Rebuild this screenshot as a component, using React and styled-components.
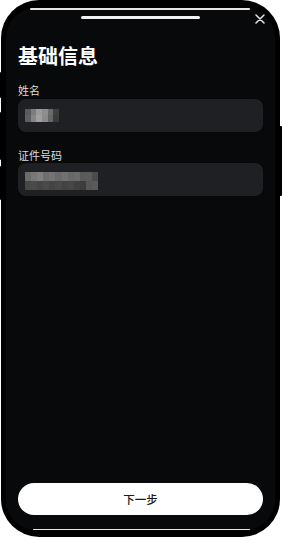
import React from "react";
import styled, { createGlobalStyle } from "styled-components";

const GlobalStyle = createGlobalStyle`
  html, body {
    margin: 0;
    padding: 0;
    background: #ffffff;
    font-family: "Noto Sans CJK SC", "Noto Sans", sans-serif;
  }
`;

const Page = styled.div`
  width: 283px;
  height: 540px;
  padding: 0 0 0 1px;
  box-sizing: border-box;
`;

const Phone = styled.div`
  position: relative;
  width: 279px;
  height: 537px;
  border-radius: 38px;
  background: #000;
  padding: 8px 5px 7px 5px;
  box-sizing: border-box;
`;

const SideKey = styled.div`
  position: absolute;
  top: ${(p) => p.$top}px;
  height: ${(p) => p.$h}px;
  width: 3px;
  background: #000;
  border-radius: 1px;
  ${(p) => (p.$right ? "right: -2px;" : "left: -1px;")}
`;

const Screen = styled.div`
  position: relative;
  height: 100%;
  border-radius: 30px;
  background: #08090a;
  display: flex;
  flex-direction: column;
  padding: 1.5px 12px 15.5px;
  box-sizing: border-box;

  &::before,
  &::after {
    content: "";
    position: absolute;
    left: 24px;
    right: 25px;
    height: 1.5px;
    border-radius: 1px;
    background: #e6e6e6;
  }
  &::before {
    top: 0;
  }
  &::after {
    bottom: 0;
    left: 27px;
  }
`;

const Grabber = styled.div`
  align-self: center;
  margin-top: 6.5px;
  width: 119px;
  height: 3px;
  border-radius: 2px;
  background: #f2f2f2;
`;

const Close = styled.div`
  position: absolute;
  top: 5px;
  right: 9px;
  width: 12px;
  height: 12px;
  display: flex;
  align-items: center;
  justify-content: center;
`;

const Title = styled.h1`
  margin: 23px 0 0;
  font-size: 20px;
  line-height: 28px;
  font-weight: 700;
  color: #fff;
`;

const Field = styled.div`
  display: flex;
  flex-direction: column;
  margin-top: ${(p) => p.$mt}px;
`;

const Label = styled.div`
  font-size: 11px;
  line-height: 15px;
  color: #dcdcdc;
`;

const Input = styled.div`
  margin-top: 0.5px;
  height: 33px;
  border-radius: 8px;
  background: #1e2023;
  display: flex;
  align-items: flex-start;
  padding: ${(p) => p.$pt}px 7px 0;
  box-sizing: border-box;
`;

const Mosaic = styled.div`
  display: grid;
  grid-template-columns: repeat(${(p) => p.$cols}, ${(p) => p.$cw}px);
  grid-auto-rows: ${(p) => p.$rh}px;
`;

const Cell = styled.div`
  background: ${(p) => p.$c};
`;

const Button = styled.button`
  margin-top: auto;
  height: 32px;
  border: none;
  border-radius: 16px;
  background: #fff;
  color: #1a1a1a;
  font-family: "Noto Sans CJK SC", sans-serif;
  font-size: 11.5px;
  font-weight: 500;
`;

const nameCells = [
  ["#5a5a5a", "#7c7c7c", "#9a9a9a", "#8e8e8e", "#6a6a6a", "#3e3e3e"],
  ["#5e5e5e", "#858585", "#a0a0a0", "#8a8a8a", "#666", "#3a3a3a"],
];

const idCells = [
  ["#6b6b6b", "#777", "#7f7f7f", "#6e6e6e", "#747474", "#6a6a6a", "#717171", "#686868", "#6c6c6c", "#5a5a5a", "#5c5c5c", "#4c4c4c"],
  ["#474747", "#4b4b4b", "#454545", "#4a4a4a", "#444", "#484848", "#434343", "#464646", "#404040", "#3c3c3c", "#565656", "#5a5a5a"],
];

const Blur = ({ rows, cw, rh }) => (
  <Mosaic $cols={rows[0].length} $cw={cw} $rh={rh}>
    {rows.flat().map((c, i) => (
      <Cell key={i} $c={c} />
    ))}
  </Mosaic>
);

export default function App() {
  return (
    <Page>
      <GlobalStyle />
      <Phone>
        <SideKey $top={72} $h={26} />
        <SideKey $top={112} $h={48} />
        <SideKey $top={166} $h={34} />
        <SideKey $right $top={126} $h={70} />
        <Screen>
          <Grabber />
          <Close>
            <svg width="10" height="10" viewBox="0 0 10 10">
              <path d="M1 1L9 9M9 1L1 9" stroke="#e8e8e8" strokeWidth="1.5" strokeLinecap="round" />
            </svg>
          </Close>
          <Title>基础信息</Title>
          <Field $mt={13}>
            <Label>姓名</Label>
            <Input $pt={10}>
              <Blur rows={nameCells} cw={5.7} rh={6.5} />
            </Input>
          </Field>
          <Field $mt={16}>
            <Label>证件号码</Label>
            <Input $pt={9}>
              <Blur rows={idCells} cw={6.1} rh={9} />
            </Input>
          </Field>
          <Button>下一步</Button>
        </Screen>
      </Phone>
    </Page>
  );
}
